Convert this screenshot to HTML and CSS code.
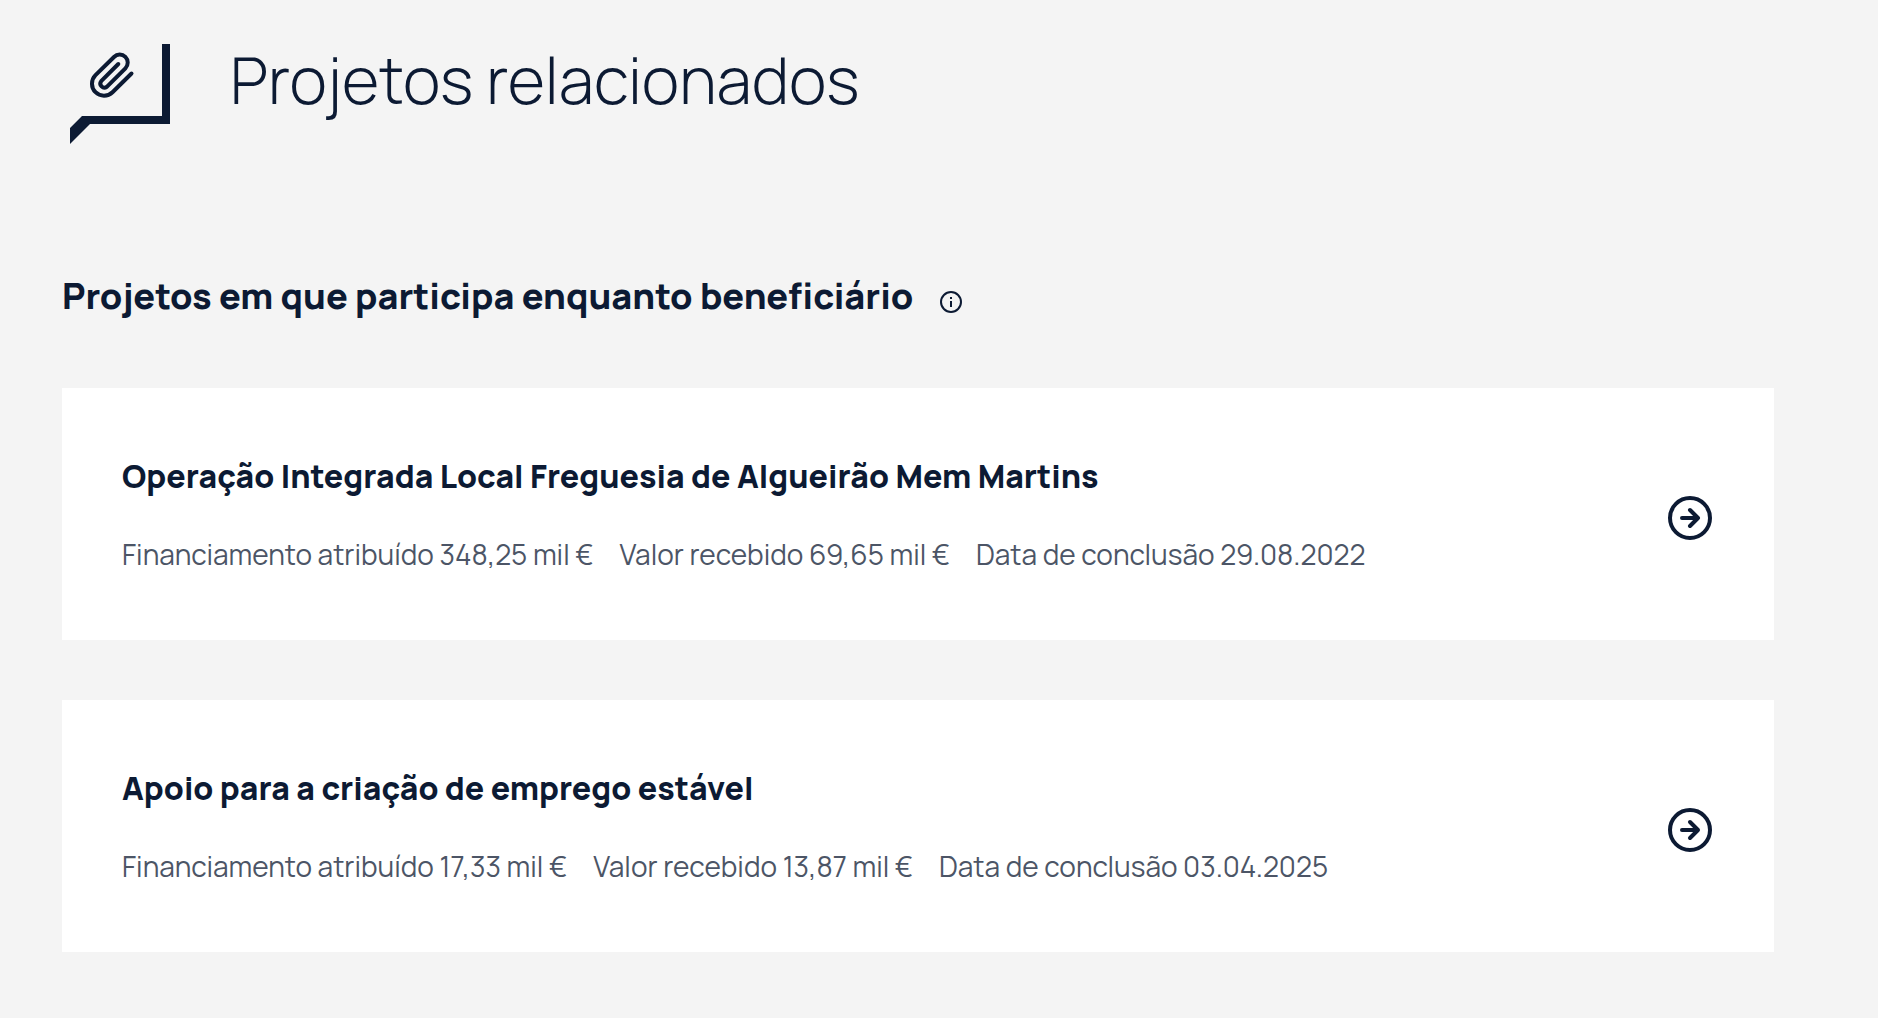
FILE: index.html
```html
<!DOCTYPE html>
<html lang="pt">
  <head>
    <meta charset="UTF-8" />
    <meta name="viewport" content="width=device-width, initial-scale=1.0" />
    <title>Projetos relacionados</title>
    <link rel="stylesheet" href="styles.css">
  </head>
  <body>
    <main class="page">
      <header class="page-header">
        <svg class="header-icon" viewBox="0 0 100 100" aria-hidden="true">
          <path class="bubble" d="M92 0h8v80H20L0 100V84l12-12h80z" />
          <path class="clip" d="M61.5 29.5 42.5 48.2A12 12 0 0 1 25.5 31.2L44 13A8 8 0 0 1 55.4 24.3L36.8 42.8A4 4 0 0 1 31.2 37.2L48.3 20" />
        </svg>
        <h1>Projetos relacionados</h1>
      </header>

      <section>
        <div class="section-title">
          <h2>Projetos em que participa enquanto beneficiário</h2>
          <button type="button" class="info" aria-label="Informação">
            <svg viewBox="0 0 24 24" aria-hidden="true">
              <circle cx="12" cy="12" r="10" />
              <path d="M12 11v6M12 7v2" />
            </svg>
          </button>
        </div>

        <div class="projects">
          <a class="project" href="#">
            <div class="project-text">
              <h3>Operação Integrada Local Freguesia de Algueirão Mem Martins</h3>
              <p class="details">
                <span>Financiamento atribuído 348,25 mil €</span>
                <span>Valor recebido 69,65 mil €</span>
                <span>Data de conclusão 29.08.2022</span>
              </p>
            </div>
            <svg class="arrow" viewBox="0 0 48 48" aria-hidden="true">
              <circle cx="24" cy="24" r="20" />
              <path d="M16 24h16M24 16l8 8-8 8" />
            </svg>
          </a>

          <a class="project" href="#">
            <div class="project-text">
              <h3>Apoio para a criação de emprego estável</h3>
              <p class="details">
                <span>Financiamento atribuído 17,33 mil €</span>
                <span>Valor recebido 13,87 mil €</span>
                <span>Data de conclusão 03.04.2025</span>
              </p>
            </div>
            <svg class="arrow" viewBox="0 0 48 48" aria-hidden="true">
              <circle cx="24" cy="24" r="20" />
              <path d="M16 24h16M24 16l8 8-8 8" />
            </svg>
          </a>
        </div>
      </section>
    </main>
  </body>
</html>
```
FILE: styles.css
```css
* {
  box-sizing: border-box;
}

body {
  margin: 0;
  background-color: #f4f4f4;
  color: #0c1a33;
  font-family: Manrope, Inter, sans-serif;
}

h1,
h2,
h3,
p {
  margin: 0;
}

.page {
  padding: 44px 104px 60px 62px;
}

.page-header {
  display: flex;
  align-items: flex-start;
  gap: 60px;
  margin-bottom: 124px;
  padding-left: 8px;
}

h1 {
  font-size: 64px;
  font-weight: 300;
  line-height: 72px;
}

.header-icon {
  flex: none;
  width: 100px;
  height: 100px;
}

.bubble {
  fill: #0c1a33;
}

.clip {
  fill: none;
  stroke: #0c1a33;
  stroke-width: 4;
  stroke-linecap: round;
  stroke-linejoin: round;
}

.section-title {
  display: flex;
  align-items: center;
  gap: 26px;
  margin-bottom: 64px;
}

h2 {
  font-size: 36px;
  font-weight: 800;
  line-height: 56px;
}

.info {
  padding: 12px 0 0;
  border: none;
  background: none;
  color: inherit;
  cursor: pointer;
}

.info svg {
  display: block;
  width: 24px;
  height: 24px;
  fill: none;
  stroke: currentColor;
  stroke-width: 2;
}

.projects {
  display: flex;
  flex-direction: column;
  gap: 60px;
}

.project {
  display: flex;
  align-items: center;
  justify-content: space-between;
  gap: 60px;
  padding: 60px;
  background-color: #fff;
  color: inherit;
  text-decoration: none;
}

.project-text {
  display: flex;
  flex-direction: column;
  gap: 24px;
}

h3 {
  font-size: 32px;
  font-weight: 800;
  line-height: 56px;
}

.details {
  display: flex;
  flex-wrap: wrap;
  column-gap: 26px;
  color: #4c5566;
  font-size: 28px;
  font-weight: 400;
  line-height: 52px;
}

.arrow {
  flex: none;
  width: 48px;
  height: 48px;
  margin-top: 8px;
  fill: none;
  stroke: #0c1a33;
  stroke-width: 4;
  stroke-linecap: round;
  stroke-linejoin: round;
}
```
